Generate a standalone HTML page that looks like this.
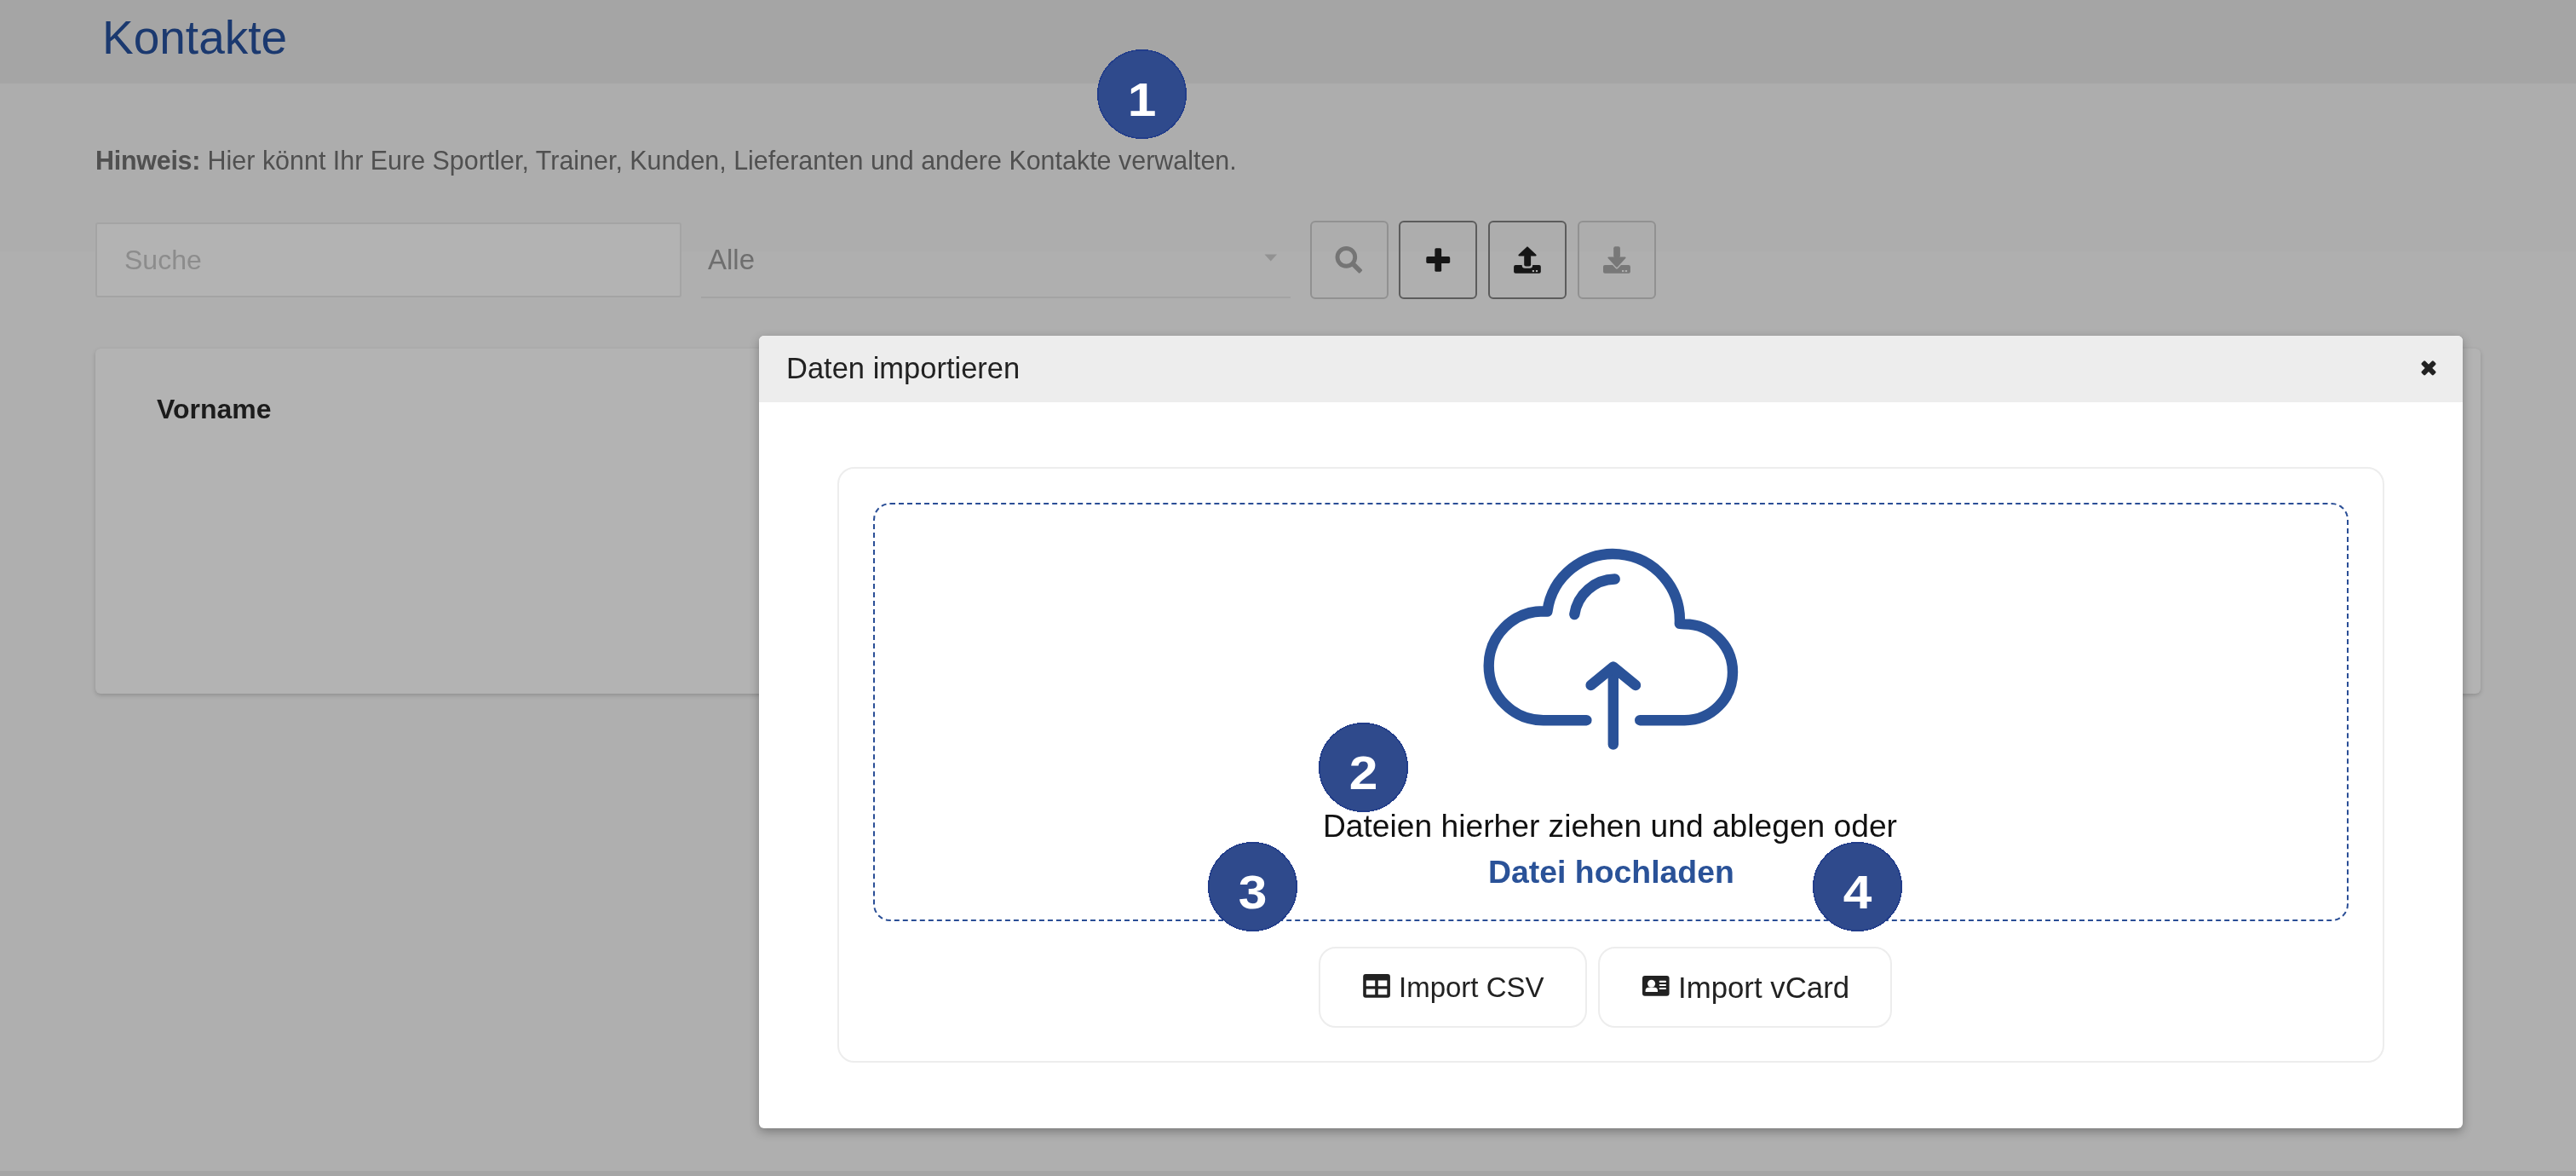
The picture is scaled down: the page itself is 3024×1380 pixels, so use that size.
<!DOCTYPE html>
<html><head><meta charset="utf-8">
<style>
html,body{margin:0;padding:0;}
body{width:3024px;height:1380px;position:relative;overflow:hidden;background:#afafaf;font-family:"Liberation Sans",sans-serif;}
.abs{position:absolute;}
.t{position:absolute;white-space:pre;line-height:1;will-change:transform;}
#hdr{left:0;top:0;width:3024px;height:98px;background:#a5a5a5;}
#ftr{left:0;top:1374px;width:3024px;height:6px;background:#a5a5a5;}
#card{left:112px;top:409px;width:2800px;height:405px;background:#b3b3b3;border-radius:6px;box-shadow:0 2px 5px rgba(0,0,0,0.18);}
#search{left:112px;top:261px;width:684px;height:84px;border:2px solid #a4a4a4;border-radius:3px;background:#b3b3b3;}
#sel{left:823px;top:348px;width:692px;height:2px;background:#a3a3a3;}
.btn{position:absolute;top:259px;width:88px;height:88px;border:2px solid #919191;border-radius:6px;}
.btn.dark{border-color:#5c5c5c;}
#modal{left:891px;top:394px;width:2000px;height:930px;background:#fff;border-radius:6px;box-shadow:0 4px 12px rgba(0,0,0,0.3);overflow:hidden;}
#mhead{left:0;top:0;width:2000px;height:78px;background:#ededed;}
#inner{left:92px;top:154px;width:1812px;height:695px;border:2px solid #ededed;border-radius:20px;}
#dash{left:40px;top:40px;width:1728px;height:487px;border:2px dashed #2a4e96;border-radius:20px;}
.ibtn{position:absolute;top:1111px;height:91px;border:2px solid #ededed;border-radius:20px;background:#fff;}
.badge{position:absolute;width:101px;height:101px;border:2px solid transparent;box-sizing:content-box;}
.badge span{will-change:transform;transform:scaleX(1.1);position:absolute;left:0;width:101px;text-align:center;top:29.6px;line-height:1;color:#fff;font-weight:bold;font-size:55px;}
</style></head>
<body>
<div id="hdr" class="abs"></div>
<div id="ftr" class="abs"></div>
<div class="abs" style="left:0;top:98px;width:3024px;height:197px;background:#adadad;"></div>

<div class="t" style="left:120.4px;top:16.8px;font-size:55px;color:#1b396f;">Kontakte</div>
<div class="t" style="left:112px;top:173px;font-size:30.45px;color:#505050;"><b style="letter-spacing:-0.25px">Hinweis:</b> Hier könnt Ihr Eure Sportler, Trainer, Kunden, Lieferanten und andere Kontakte verwalten.</div>

<div id="search" class="abs"></div>
<div class="t" style="left:146px;top:289px;font-size:32px;color:#8c8c8c;">Suche</div>
<div id="sel" class="abs"></div>
<div class="t" style="left:831px;top:288px;font-size:33px;color:#6e6e6e;">Alle</div>
<svg class="abs" style="left:1484px;top:298px" width="16" height="9"><path d="M0.5 0.5 L15 0.5 L7.75 8.5 Z" fill="#929292"/></svg>

<div class="btn" style="left:1538px;"></div>
<div class="btn dark" style="left:1642px;"></div>
<div class="btn dark" style="left:1747px;"></div>
<div class="btn" style="left:1852px;"></div>

<div id="card" class="abs"></div>
<div class="t" style="left:184px;top:464px;font-size:32px;font-weight:bold;color:#1c1c1c;">Vorname</div>

<div id="modal" class="abs">
  <div id="mhead" class="abs"></div>
  <div class="t" style="left:32px;top:21px;font-size:34.5px;color:#222;">Daten importieren</div>
  <div id="inner" class="abs">
    <div id="dash" class="abs"></div>
  </div>
</div>

<div class="t" style="left:1553px;top:951px;font-size:37.2px;color:#111;">Dateien hierher ziehen und ablegen oder</div>
<div class="t" style="left:1747px;top:1005px;font-size:37.4px;font-weight:bold;color:#2a5298;">Datei hochladen</div>

<div class="ibtn" style="left:1548px;width:311px;"></div>
<div class="ibtn" style="left:1876px;width:341px;"></div>
<div class="t" style="left:1642px;top:1142px;font-size:33px;color:#222;">Import CSV</div>
<div class="t" style="left:1970px;top:1142px;font-size:34.8px;color:#222;">Import vCard</div>

<svg class="abs" style="left:0;top:0" width="3024" height="1380" viewBox="0 0 3024 1380">
 <defs>
  <mask id="upm" maskUnits="userSpaceOnUse" x="1770" y="280" width="50" height="50">
   <rect x="1770" y="280" width="50" height="50" fill="#fff"/>
   <rect x="1786.7" y="296" width="12.4" height="18.8" rx="3.5" fill="#000"/>
   <rect x="1798.8" y="317" width="2.2" height="2.1" fill="#000"/>
   <rect x="1802.9" y="317" width="2.2" height="2.1" fill="#000"/>
  </mask>
  <mask id="dnm" maskUnits="userSpaceOnUse" x="1875" y="280" width="50" height="50">
   <rect x="1875" y="280" width="50" height="50" fill="#fff"/>
   <path d="M1884.6 299.6 L1898 313.9 L1911.4 299.6 Z" fill="#000" stroke="#000" stroke-width="3.2" stroke-linejoin="round"/>
   <rect x="1904" y="317" width="2.3" height="2.1" fill="#000"/>
   <rect x="1907.8" y="317" width="2.3" height="2.1" fill="#000"/>
  </mask>
 </defs>
 <!-- search -->
 <circle cx="1580.35" cy="301.85" r="10.35" fill="none" stroke="#757575" stroke-width="4.9"/>
 <rect x="10" y="-2.8" width="14.5" height="5.6" rx="1.2" fill="#757575" transform="translate(1580.35 301.85) rotate(45)"/>
 <!-- plus -->
 <rect x="1684.35" y="291.2" width="7.8" height="27.6" rx="1.6" fill="#161616"/>
 <rect x="1674.3" y="301.1" width="27.9" height="7.8" rx="1.6" fill="#161616"/>
 <!-- upload -->
 <g mask="url(#upm)">
  <rect x="1777.1" y="311.1" width="31.7" height="9.7" rx="2" fill="#161616"/>
 </g>
 <path d="M1793 290.4 L1802.6 299.5 L1783.4 299.5 Z" fill="#161616" stroke="#161616" stroke-width="2" stroke-linejoin="round"/>
 <rect x="1789.2" y="299" width="7.9" height="13.6" rx="2" fill="#161616"/>
 <!-- download -->
 <g mask="url(#dnm)">
  <rect x="1882" y="311.1" width="31.9" height="9.7" rx="2" fill="#787878"/>
 </g>
 <rect x="1894.2" y="289.3" width="7.7" height="13" rx="2" fill="#787878"/>
 <path d="M1888.4 302.4 L1907.6 302.4 L1898 312.7 Z" fill="#787878" stroke="#787878" stroke-width="2" stroke-linejoin="round"/>
 <!-- close -->
 <g transform="translate(2851 431.8)" fill="#222"><rect x="-9.9" y="-3" width="19.8" height="6" rx="1.4" transform="rotate(45)"/><rect x="-9.9" y="-3" width="19.8" height="6" rx="1.4" transform="rotate(-45)"/></g>
 <!-- cloud -->
 <g fill="none" stroke="#2a5298" stroke-width="12.4" stroke-linecap="round" stroke-linejoin="round">
  <path d="M1862.4 845.2 L1811.7 845.2 A64 64 0 0 1 1811.7 717.2 L1816.4 717.6 A78.1 78.1 0 0 1 1971.8 731.9 L1977.6 732.4 A56.4 56.4 0 0 1 1977.6 845.2 L1925.2 845.2"/>
  <path d="M1848.3 721 A48.8 48.8 0 0 1 1895.7 679.5"/>
  <path d="M1893.8 873.6 L1893.8 784"/>
  <path d="M1867.6 804 L1893.8 782.6 L1920 804"/>
 </g>
 <!-- csv icon -->
 <path fill="#222" fill-rule="evenodd" d="M1603.2 1143 h25.7 a3 3 0 0 1 3 3 v21.8 a3 3 0 0 1 -3 3 h-25.7 a3 3 0 0 1 -3 -3 v-21.8 a3 3 0 0 1 3 -3 z M1603.8 1150.6 v6.6 h10.4 v-6.6 z M1617.8 1150.6 v6.6 h10.5 v-6.6 z M1603.8 1160.6 v6.6 h10.4 v-6.6 z M1617.8 1160.6 v6.6 h10.5 v-6.6 z"/>
 <!-- vcard icon -->
 <path fill="#222" fill-rule="evenodd" d="M1931 1145.1 h25.6 a3 3 0 0 1 3 3 v17.6 a3 3 0 0 1 -3 3 h-25.6 a3 3 0 0 1 -3 -3 v-17.6 a3 3 0 0 1 3 -3 z"/>
 <circle cx="1938.6" cy="1154.3" r="4.5" fill="#fff"/>
 <path d="M1931.6 1164 v-1.5 a3.8 3.8 0 0 1 3.8 -3.8 h6.8 a3.8 3.8 0 0 1 3.8 3.8 v1.5 z" fill="#fff"/>
 <rect x="1947.7" y="1150.8" width="8.3" height="2.2" rx="1" fill="#fff"/>
 <rect x="1947.7" y="1155" width="8.3" height="2.1" rx="1" fill="#fff"/>
 <rect x="1947.7" y="1158.9" width="8.3" height="2.1" rx="1" fill="#fff"/>
 <g fill="#2f4a8c" stroke="#223d8a" stroke-width="1.6" shape-rendering="crispEdges">
  <circle cx="1340.5" cy="110.5" r="51.7"/>
  <circle cx="1600.5" cy="900.5" r="51.7"/>
  <circle cx="1470.5" cy="1040.5" r="51.7"/>
  <circle cx="2180.5" cy="1040.5" r="51.7"/>
 </g>
</svg>

<div class="badge" style="left:1288px;top:58px;"><span>1</span></div>
<div class="badge" style="left:1548px;top:848px;"><span>2</span></div>
<div class="badge" style="left:1418px;top:988px;"><span>3</span></div>
<div class="badge" style="left:2128px;top:988px;"><span>4</span></div>
</body></html>
